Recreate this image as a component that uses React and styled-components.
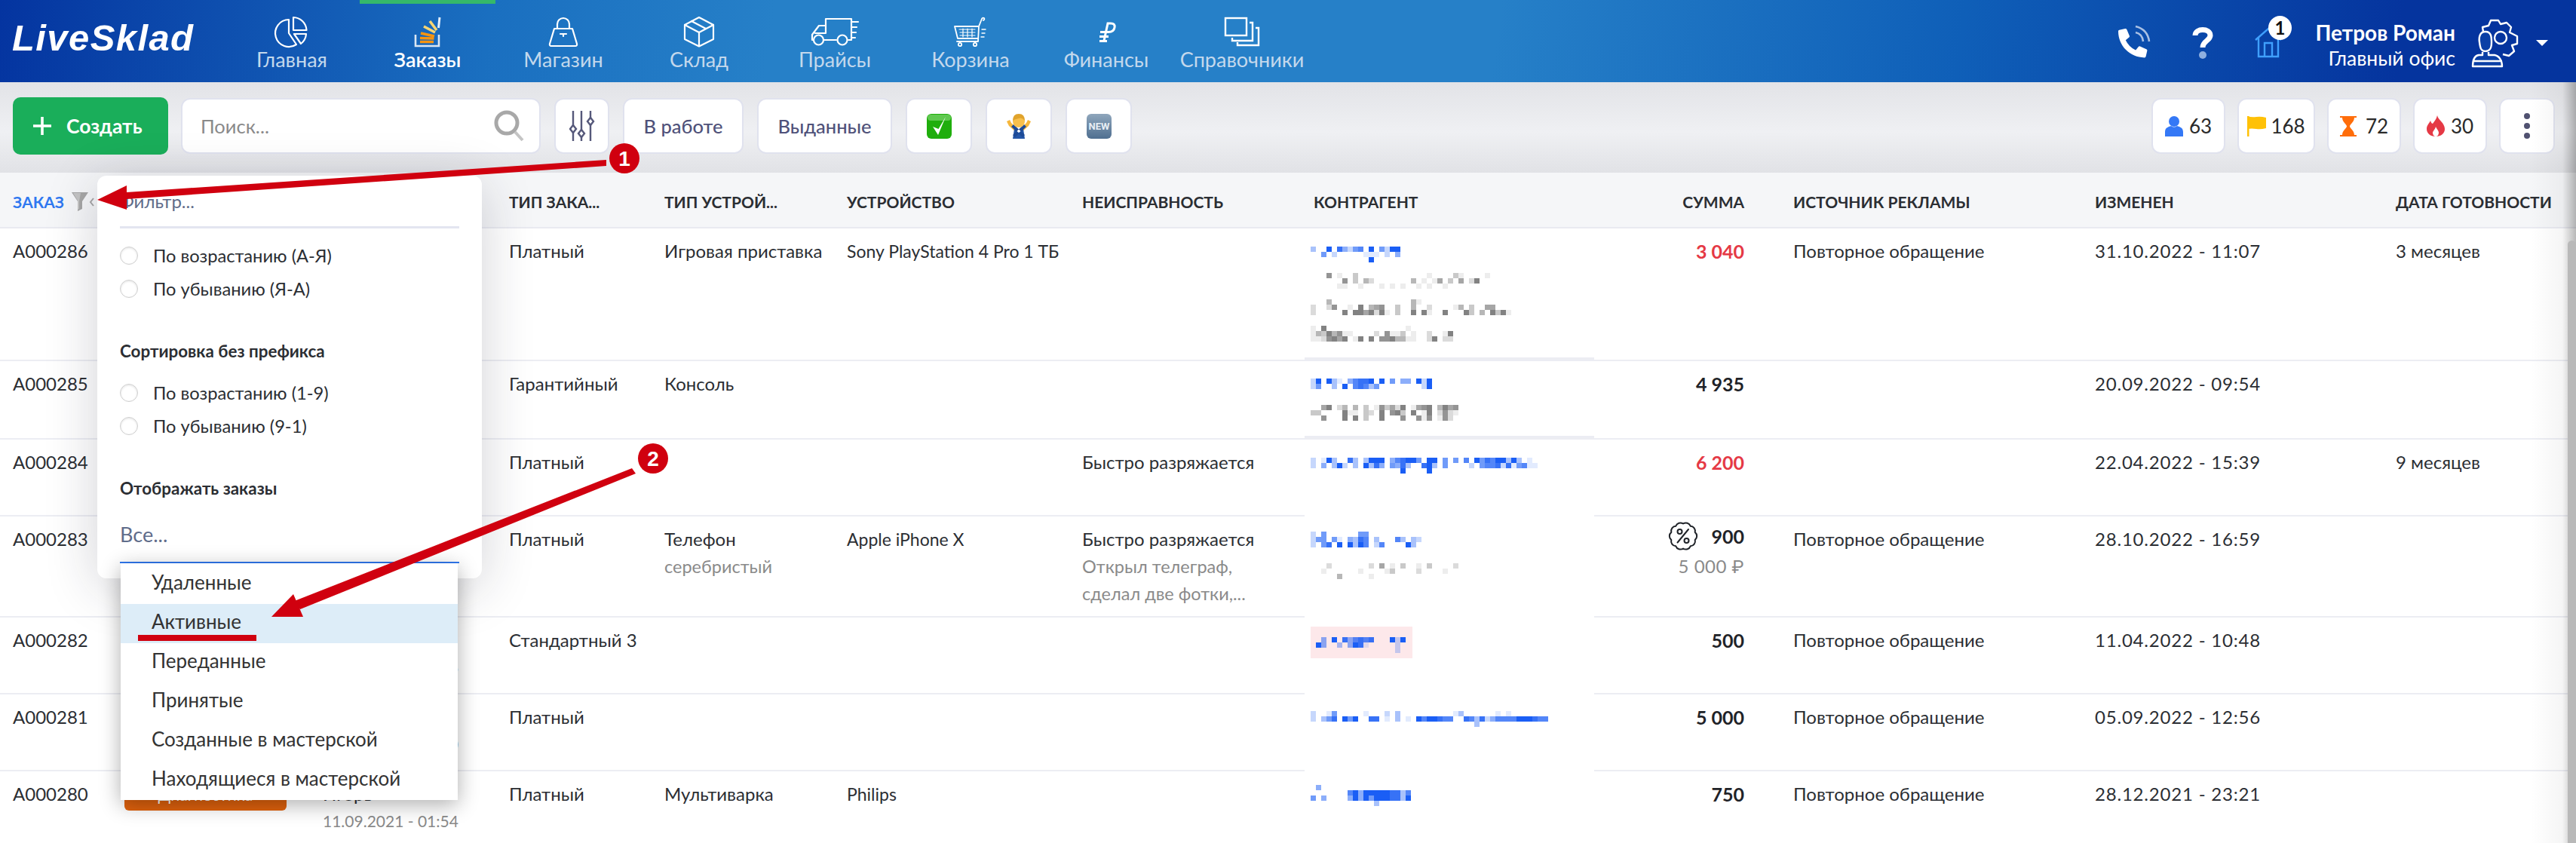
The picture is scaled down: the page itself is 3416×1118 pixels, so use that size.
import React from 'react'
import styled, { createGlobalStyle } from 'styled-components'

const FONT = `Lato, Roboto, "Noto Sans", "DejaVu Sans", sans-serif`

const GlobalStyle = createGlobalStyle`
    html, body { margin: 0; padding: 0; background: #fff; }
    body { font-family: ${FONT}; color: #2b2e33; }
    * { box-sizing: border-box; }
`

const Page = styled.div`
    position: relative;
    width: 3416px;
    height: 1118px;
    overflow: hidden;
    background: #fff;
`

/* ---------- top bar ---------- */

const Header = styled.header`
    display: flex;
    height: 109px;
    background: linear-gradient(97deg, #0434a0 0%, #1a6fc0 19%, #2680c8 30%, #2680c8 58%, #0f5fb8 76%, #05349e 93%);
`

const Logo = styled.div`
    width: 297px;
    padding: 20px 0 0 16px;
    font-family: "Liberation Sans", sans-serif;
    font-size: 49px;
    line-height: 60px;
    font-weight: 700;
    font-style: italic;
    color: #fff;
    letter-spacing: 1.4px;
`

const Tab = styled.div`
    width: 180px;
    display: flex;
    flex-direction: column;
    align-items: center;
    border-top: 5px solid ${props => props.$active ? '#35b86a' : 'transparent'};
    padding-top: 17px;
`

const TabIcon = styled.div`
    height: 40px;
    display: flex;
    align-items: center;
    justify-content: center;
    svg { overflow: visible; }
`

const TabLabel = styled.div`
    margin-top: 3px;
    font-size: 27px;
    line-height: 28px;
    font-weight: ${props => props.$active ? 600 : 400};
    color: ${props => props.$active ? '#fff' : '#c3d8ec'};
`

const HeaderRight = styled.div`
    margin-left: auto;
    display: flex;
    align-items: center;
    padding: 5px 37px 0 0;
`

const HeaderSlot = styled.div`
    position: relative;
    display: flex;
    margin-left: ${props => props.$ml}px;
    svg { overflow: visible; }
`

const HouseBadge = styled.span`
    position: absolute;
    top: -16px;
    left: 18px;
    width: 31px;
    height: 32px;
    border-radius: 50%;
    background: #fff;
    color: #111;
    font-size: 24px;
    font-weight: 700;
    line-height: 32px;
    text-align: center;
`

const UserBlock = styled.div`
    margin-left: 14px;
    width: 216px;
    text-align: right;
    color: #fff;
    margin-top: 6px;
`

const UserName = styled.div`
    font-size: 28px;
    line-height: 34px;
    font-weight: 700;
    white-space: nowrap;
`

const UserOffice = styled.div`
    font-size: 26.5px;
    line-height: 34px;
    white-space: nowrap;
`

/* ---------- toolbar ---------- */

const Toolbar = styled.div`
    display: flex;
    align-items: center;
    gap: 18px;
    height: 120px;
    padding: 0 28px 4px 17px;
    background: linear-gradient(180deg, #e2e3e7 0%, #eff0f3 55%, #e1e2e6 100%);
`

const CreateButton = styled.button`
    all: unset;
    box-sizing: border-box;
    width: 206px;
    height: 76px;
    margin-right: -1px;
    display: flex;
    align-items: center;
    padding-left: 27px;
    gap: 20px;
    border-radius: 10px;
    background: #1aae5a;
    color: #fff;
    font-size: 26.5px;
    font-weight: 700;
`

const ToolButton = styled.button`
    all: unset;
    box-sizing: border-box;
    height: 74px;
    width: ${props => props.$w}px;
    display: flex;
    align-items: center;
    justify-content: center;
    gap: ${props => props.$gap || 0}px;
    background: #fff;
    border: 2px solid #e0e2ee;
    border-radius: 12px;
    color: #50527a;
    font-size: 25.5px;
    font-weight: 500;
`

const CountButton = styled(ToolButton)`
    color: #2a2a2a;
    font-size: 26px;
    font-weight: 400;
`

const SearchBox = styled.div`
    width: 477px;
    height: 74px;
    display: flex;
    align-items: center;
    justify-content: space-between;
    padding: 0 20px 0 24px;
    background: #fff;
    border: 2px solid #e0e2ee;
    border-radius: 12px;
    color: #8a8a8a;
    font-size: 25.5px;
`

const CountGroup = styled.div`
    margin-left: auto;
    display: flex;
    gap: 16px;
`

/* ---------- table ---------- */

const COLUMNS = '148px 263px 247px 206px 242px 312px 303px 376px 264px 400px 399px 228px'

const HeadRow = styled.div`
    display: grid;
    grid-template-columns: ${COLUMNS};
    align-items: center;
    height: 74px;
    padding: 4px 0 0 17px;
    background: #f5f6f8;
    border-bottom: 2px solid #e9eaf1;
`

const HeadCell = styled.div`
    display: flex;
    align-items: center;
    gap: 10px;
    font-size: 21px;
    font-weight: 700;
    padding-left: ${props => props.$inset || 0}px;
    color: ${props => props.$active ? '#2f78f0' : '#2b2e33'};
    ${props => props.$right && 'justify-content: flex-end; padding-right: 65px;'}
`

const Row = styled.div`
    display: grid;
    grid-template-columns: ${COLUMNS};
    height: ${props => props.$h}px;
    padding-left: 17px;
    border-bottom: 2px solid #ecedf3;
    font-size: 24px;
    line-height: 36px;
`

const Cell = styled.div`
    padding-top: 12px;
    white-space: nowrap;
`

const DeviceCell = styled(Cell)`
    font-size: 23px;
`

const TimeCell = styled(Cell)`
    letter-spacing: .8px;
`

const Muted = styled.div`
    color: #8a8a8a;
    font-size: 23.5px;
`

const StatusCell = styled.div`
    position: relative;
`

const StatusBadge = styled.div`
    width: 215px;
    margin-top: 12px;
    height: 40px;
    border-radius: 6px;
    background: #e0620d;
    color: #fff;
    font-size: 21px;
    line-height: 38px;
    text-align: center;
`

const DateCell = styled(Cell)`
    width: 179px;
    text-align: ${props => props.$right ? 'right' : 'left'};
`

const DateSub = styled.div`
    color: #8a8a8a;
    font-size: 21px;
    text-align: right;
`

const PartnerCell = styled.div`
    margin: 0 0 ${props => props.$thick ? -4 : -2}px -8px;
    padding-left: 8px;
    background: #fff;
    ${props => props.$thick && 'border-bottom: 7px solid #ecedf3;'}
    svg { display: block; }
`

const SumCell = styled(Cell)`
    padding-right: 65px;
    text-align: right;
    font-weight: 700;
    font-size: 25px;
    color: ${props => props.$red ? '#e53945' : '#1f2328'};
`

const SumLine = styled.div`
    display: flex;
    justify-content: flex-end;
    align-items: center;
    gap: 17px;
    margin-top: -8px;
    height: 44px;
`

const OldSum = styled.div`
    font-weight: 400;
    font-size: 24px;
    color: #8a8a8a;
    letter-spacing: .5px;
`

/* ---------- filter popup ---------- */

const Popup = styled.div`
    position: absolute;
    left: 129px;
    top: 233px;
    width: 510px;
    height: 534px;
    padding: 0 30px;
    background: #fff;
    border-radius: 12px;
    box-shadow: 0 12px 70px rgba(30, 30, 50, .2);
`

const PopupInput = styled.div`
    display: flex;
    align-items: center;
    height: 70px;
    border-bottom: 3px solid #e3e5f0;
    margin-bottom: 14px;
    color: #5f6c8a;
    font-size: 24px;
`

const RadioRow = styled.label`
    display: flex;
    align-items: center;
    gap: 20px;
    height: 44px;
    font-size: 23.7px;
`

const RadioMark = styled.span`
    width: 24px;
    height: 24px;
    border-radius: 50%;
    background: #fff;
    border: 1.5px solid #cfcfcf;
    box-shadow: inset 0 1px 3px rgba(0, 0, 0, .12);
`

const PopupTitle = styled.div`
    margin-top: ${props => props.$top}px;
    margin-bottom: ${props => props.$bottom}px;
    height: 44px;
    line-height: 44px;
    font-size: 22.4px;
    font-weight: 700;
`

const SelectValue = styled.div`
    display: flex;
    align-items: center;
    height: 77px;
    padding-top: 2px;
    border-bottom: 2px solid #2f78f0;
    color: #5f6c8a;
    font-size: 27px;
`

const Dropdown = styled.ul`
    position: absolute;
    left: 31px;
    top: 514px;
    width: 447px;
    margin: 0;
    padding: 2px 0 0;
    list-style: none;
    background: #fff;
    box-shadow: 0 6px 26px rgba(0, 0, 0, .32);
`

const DropdownItem = styled.li`
    height: 52px;
    padding-left: 41px;
    font-size: 26px;
    line-height: 47px;
    color: #333;
    background: ${props => props.$hover ? '#ddedf8' : 'transparent'};
`

/* ---------- things lying over the page ---------- */

const EdgeShade = styled.div`
    position: absolute;
    top: 109px;
    right: 0;
    bottom: 0;
    width: 60px;
    background: linear-gradient(90deg, rgba(0,0,0,0) 0%, rgba(0,0,0,.04) 70%, rgba(0,0,0,.28) 100%);
    pointer-events: none;
`

const ScrollThumb = styled.div`
    position: absolute;
    top: 319px;
    right: 0;
    bottom: 0;
    width: 11px;
    border-radius: 6px 6px 0 0;
    background: #b9b9b9;
`

const Annotations = styled.svg`
    position: absolute;
    left: 0;
    top: 0;
    pointer-events: none;
    font-family: "Liberation Sans", sans-serif;
`

/* ---------- icons ---------- */

const line = { fill: 'none', stroke: '#fff', strokeWidth: 2.2, strokeLinejoin: 'round', strokeLinecap: 'round' }

const PieIcon = () => (
    <svg width="40" height="40" viewBox="0 0 40 40" {...line}>
        <path d="M16 4A18 18 0 1 0 26 37L16 22Z" />
        <path d="M22 1A18 18 0 0 1 39.5 18H22Z" />
        <path d="M23 23H39A18 18 0 0 1 32 36Z" />
    </svg>
)

const OrdersIcon = () => (
    <svg width="35" height="40" viewBox="0 0 35 40" fill="none">
        <path d="M1 24V39H32V24" stroke="#dbe7f3" strokeWidth="2.6" />
        <path d="M7 33.5H25M7 28.5L25.5 29M8 22L26 26" stroke="#f7940f" strokeWidth="3.6" />
        <path d="M12 13L27 21M20 6L29 18" stroke="#f8d673" strokeWidth="3.6" />
        <path d="M33 1L31.5 15" stroke="#e3eefa" strokeWidth="3" />
    </svg>
)

const BagIcon = () => (
    <svg width="40" height="40" viewBox="0 0 40 40" {...line}>
        <path d="M12 16V10A8 8 0 0 1 28 10V16" />
        <path d="M8 16H32L38 36Q38.5 39 36 39H4Q1.5 39 2 36Z" />
        <path d="M16 23H24M20 23V26" />
    </svg>
)

const BoxIcon = () => (
    <svg width="40" height="40" viewBox="0 0 40 40" {...line}>
        <path d="M20 1L39 11V30L20 39.5L1 30V11Z" />
        <path d="M1 11L20 21L39 11M20 21V39M10 6L29 16" />
    </svg>
)

const TruckIcon = () => (
    <svg width="62" height="36" viewBox="0 0 62 36" {...line}>
        <path d="M19 12V1H53V29H49M33 29H17M3 29H1V22L10 10H19V20H5" />
        <circle cx="9.5" cy="29" r="6.5" />
        <circle cx="41" cy="29" r="6.5" />
        <path d="M53 5H62M53 12H60M53 19H59M53 26H58" />
    </svg>
)

const CartIcon = () => (
    <svg width="44" height="38" viewBox="0 0 44 38" {...line} strokeWidth="1.8">
        <path d="M1 12H33L37 2Q38 0 40 1Q41 3 39 4M1 12L5 28H31M4 32H32L33 12" />
        <path d="M7 16H28M8 20H28M8 24H28M12 15V26M18 15V26M24 15V26" strokeWidth="1.2" />
        <circle cx="8" cy="36" r="2.2" />
        <circle cx="28" cy="36" r="2.2" />
        <path d="M37 16H42M37 21H41M36 26H40" strokeWidth="1.4" />
    </svg>
)

const RubleIcon = () => (
    <svg width="24" height="27" viewBox="0 0 24 27" fill="none" stroke="#fff" strokeWidth="3">
        <path d="M9 25L14 2H18Q24 2 23 7.5Q22 13.5 15 13.5H4M3 19.5H15M3 25.5H13" />
    </svg>
)

const PagesIcon = () => (
    <svg width="46" height="38" viewBox="0 0 46 38" fill="none" stroke="#fff" strokeWidth="2.4">
        <rect x="1" y="1" width="28" height="23" />
        <path d="M33 7H37V31H10V27M41 14H45V37H17V33" />
    </svg>
)

const PhoneIcon = () => (
    <svg width="42" height="42" viewBox="0 0 42 42">
        <path transform="translate(0 2) scale(.075)" fill="#fff" d="M497.39 361.8l-112-48a24 24 0 0 0-28 6.9l-49.6 60.6A370.66 370.66 0 0 1 130.6 204.11l60.6-49.6a23.94 23.94 0 0 0 6.9-28l-48-112A24.16 24.16 0 0 0 122.6.61l-104 24A24 24 0 0 0 0 48c0 256.5 207.9 464 464 464a24 24 0 0 0 23.4-18.6l24-104a24.29 24.29 0 0 0-14.01-27.6z" />
        <path d="M23 7Q32 9 33 19M23 -1Q39 3 41 19" fill="none" stroke="#a9c0e4" strokeWidth="2.6" />
    </svg>
)

const QuestionIcon = () => (
    <svg width="28" height="42" viewBox="0 0 28 42">
        <path d="M4 11C4 1 24 1 24 11C24 18 14 18 14 27" fill="none" stroke="#fff" strokeWidth="7" />
        <ellipse cx="14" cy="37" rx="5" ry="5" fill="#8fb0e0" />
    </svg>
)

const HouseIcon = () => (
    <svg width="36" height="40" viewBox="0 0 36 40" fill="none" stroke="#3fa0ff" strokeWidth="2.4">
        <path d="M1 16L18 1L35 16M5 13V38H31V13M13 38V20H23V38" />
    </svg>
)

const GearUserIcon = () => (
    <svg width="62" height="62" viewBox="0 0 62 62" fill="none" stroke="#fff" strokeWidth="2.4" strokeLinejoin="round">
        <path d="M16 22L14 10L22 8L25 1H35L38 6L46 4L52 10L50 17L60 22V32L53 34L56 42L49 48L41 46" />
        <circle cx="38" cy="24" r="8" />
        <path d="M18 16C10 16 9 24 10 30C11 38 12 42 18 42C24 42 26 38 26 30C26 24 26 16 18 16Z" fill="#0a3fa6" />
        <path d="M14 43V47H9C3 48 1 54 1 62H40C40 54 36 48 30 47H22V43M1 55H40" fill="#0a3fa6" />
    </svg>
)

const CaretIcon = () => (
    <svg width="16" height="8" viewBox="0 0 16 8">
        <path d="M0 0H16L8 8Z" fill="#fff" />
    </svg>
)

const PlusIcon = () => (
    <svg width="24" height="24" viewBox="0 0 24 24" stroke="#fff" strokeWidth="3.6">
        <path d="M12 0V24M0 12H24" />
    </svg>
)

const SearchIcon = () => (
    <svg width="40" height="42" viewBox="0 0 40 42" fill="none" stroke="#a8a8a8">
        <circle cx="17" cy="17" r="14" strokeWidth="5" />
        <path d="M28 29L38 40" strokeWidth="4" stroke="#c4c4c4" />
    </svg>
)

const SlidersIcon = () => (
    <svg width="34" height="42" viewBox="0 0 34 42" fill="none" stroke="#55587a" strokeWidth="2.4">
        <path d="M5 1V21M5 29V41M16 1V27M16 35V41M28 1V11M28 19V41" />
        <path d="M5 20L9 25L5 30L1 25ZM16 26L20 31L16 36L12 31ZM28 10L32 15L28 20L24 15Z" />
    </svg>
)

const CheckEmoji = () => (
    <svg width="33" height="33" viewBox="0 0 33 33">
        <rect width="33" height="33" rx="6" fill="#1fae0c" />
        <rect x="1" y="1" width="31" height="8" rx="4" fill="#5fc94f" />
        <path d="M8 17L15 28L25 4L15.5 20Z" fill="#fff" />
    </svg>
)

const PersonEmoji = () => (
    <svg width="32" height="34" viewBox="0 0 32 34">
        <path d="M0 11L4 9L6 13L15 22L12 25L3 17Z M32 11L28 9L26 13L17 22L20 25L29 17Z" fill="#f6b73c" />
        <path d="M8 34L10 21L16 26L22 21L24 34Z" fill="#2457a8" />
        <path d="M6 18L9 15L24 29L21 32Z M26 18L23 15L8 29L11 32Z" fill="#1d4a96" />
        <circle cx="16" cy="11" r="8" fill="#f8c04c" />
        <path d="M8 10Q8 1 16 1Q24 1 24 10Q20 5 16 7Q11 8 8 10Z" fill="#e0a32c" />
    </svg>
)

const NewEmoji = () => (
    <svg width="33" height="33" viewBox="0 0 33 33">
        <defs>
            <linearGradient id="newBg" x1="0" y1="0" x2="0" y2="1">
                <stop offset="0" stopColor="#8fa6bc" />
                <stop offset="1" stopColor="#4f6f90" />
            </linearGradient>
        </defs>
        <rect width="33" height="33" rx="6" fill="url(#newBg)" />
        <text x="16.5" y="21" textAnchor="middle" fontSize="13" fontWeight="700" fill="#e8eef4" fontFamily="Roboto, sans-serif">NEW</text>
    </svg>
)

const PersonCount = () => (
    <svg width="24" height="27" viewBox="0 0 24 27" fill="#3478f6">
        <circle cx="12" cy="7" r="7" />
        <path d="M0 27V21C0 15 5 14 8 13Q12 16 16 13C19 14 24 15 24 21V27Z" />
    </svg>
)

const FlagCount = () => (
    <svg width="25" height="27" viewBox="0 0 25 27" fill="#ffc107">
        <path d="M0 0H2.5V27H0Z" />
        <path d="M0 0Q6 2 12 1T25 2V16Q18 18 12 17T0 17Z" />
    </svg>
)

const GlassCount = () => (
    <svg width="22" height="27" viewBox="0 0 22 27" fill="#ff6d0a">
        <path d="M0 0H22V2H19C19 8 13 11 13 13.5C13 16 19 19 19 25H22V27H0V25H3C3 19 9 16 9 13.5C9 11 3 8 3 2H0Z" />
    </svg>
)

const FlameCount = () => (
    <svg width="24" height="28" viewBox="0 0 24 28" fill="#e53945">
        <path d="M14 0C15 6 24 10 24 18C24 24 19 28 12 28C5 28 0 24 0 18C0 13 3 11 5 7C6 10 7 11 8 11C10 8 13 5 14 0Z" />
        <path d="M12 15C13 18 16 20 16 23C16 26 14 28 12 28C10 28 8 26 8 23C8 21 11 19 12 15Z" fill="#fff" />
    </svg>
)

const DotsIcon = () => (
    <svg width="8" height="34" viewBox="0 0 8 34" fill="#505170">
        <circle cx="4" cy="4" r="4" />
        <circle cx="4" cy="17" r="4" />
        <circle cx="4" cy="30" r="4" />
    </svg>
)

const FunnelIcon = () => (
    <svg width="30" height="25" viewBox="0 0 30 25">
        <path d="M0 0H22L14 12V22L8 25V12Z" fill="#a6a6a6" />
        <path d="M2 1H12L10 12V22L8 23V11Z" fill="#c4c4c4" />
        <path d="M29 8L25 13L29 18" fill="none" stroke="#a6a6a6" strokeWidth="2" />
    </svg>
)

// wavy discount seal: ten bumps round a circle
const sealPath = () => {
    let d = ''
    for (let i = 0; i < 10; i++) {
        const a = (i / 10) * 2 * Math.PI - Math.PI / 2
        const x = (20 + 16.5 * Math.cos(a)).toFixed(1)
        const y = (20 + 16.5 * Math.sin(a)).toFixed(1)
        d += i === 0 ? `M${x} ${y}` : `A6.5 6.5 0 0 1 ${x} ${y}`
    }
    const x0 = 20
    const y0 = 3.5
    return `${d}A6.5 6.5 0 0 1 ${x0} ${y0}Z`
}

const SealIcon = () => (
    <svg width="40" height="40" viewBox="0 0 40 40" fill="none" stroke="#1f2328" strokeWidth="2">
        <path d={sealPath()} strokeLinejoin="round" />
        <circle cx="15.5" cy="14" r="3" />
        <circle cx="24.5" cy="26" r="3" />
        <path d="M27 11L12.5 28.500" strokeLinecap="round" />
    </svg>
)

/* ---------- the blurred-out customer cells ---------- */

const CELL = 7
const BLUE = '#1a5ef5'
const GREY = '#707070'

function Mosaic({ blocks, height, pink }) {
    return (
        <svg width="376" height={height} shapeRendering="crispEdges">
            {pink && <rect x="0" y="12" width="135" height="42" fill="#fde8ea" />}
            {blocks.map(([top, color, rows], b) => rows.map((text, r) => text.split('').map((ch, i) => (
                ch === '.' ? null :
                    <rect key={`${b}-${r}-${i}`} x={i * CELL} y={top + r * CELL} width={CELL} height={CELL} fill={color} opacity={Number(ch) / 8} />
            ))))}
        </svg>
    )
}

const PARTNERS = [
    [
        [24, BLUE, ['30080742560805288', '00502000001110204', '...........8']],
        [59, GREY, ['...6.1..3.............1....31....1', '......6.3.42.......4.1.15.3.5.27', '.....11..1...1.1.1..1.1..1']],
        [94, GREY, ['...4...............41', '2..26..1.7.456..3..4..2....14.3..55', '2.....7.7757271.3..7.71..7...73.4.7371']],
        [129, GREY, ['1.7...............1', '14374611....2.6113.1..2..17', '1126757.17.7.6674411..27.22']],
    ],
    [
        [23, BLUE, ['28.831.46778.8.5.44.828', '25..3.8.67635........28']],
        [58, GREY, ['..57.24.4.3.163527.1567.4756', '33....711.32.7.673.7.17.2621', '..6...7.7.3..7...6..616.162']],
    ],
    [
        [24, BLUE, ['2.183..73.3888.467885.88.5.5.6.857688383.1', '2.4.382.3.8374.5473..783.5....2.56672715611', '.................8....8']],
    ],
    [
        [20, BLUE, ['2.5......55', '255.51.4376.3...63.32', '2.57.8.8386.26....83']],
        [62, GREY, ['...2.......2.5.1.3..1.3....2', '..1......1....13....2....1', '.....4.....1']],
    ],
    [
        [26, BLUE, ['..4.8.746767...828', '.84..3.4871.....2', '................2']],
    ],
    [
        [22, BLUE, ['2..15.....1...2.3..........13......1.1', '2.357.858..77.1.3.1.8688766..7637246666888766', '...............................3']],
    ],
    [
        [18, BLUE, ['.4', '.......684888887736', '5.4....484858887738', '............3']],
    ],
]

/* ---------- data ---------- */

const NAV = [
    ['Главная', <PieIcon />],
    ['Заказы', <OrdersIcon />, true],
    ['Магазин', <BagIcon />],
    ['Склад', <BoxIcon />],
    ['Прайсы', <TruckIcon />],
    ['Корзина', <CartIcon />],
    ['Финансы', <RubleIcon />],
    ['Справочники', <PagesIcon />],
]

const HEADS = ['ТИП ЗАКА...', 'ТИП УСТРОЙ...', 'УСТРОЙСТВО', 'НЕИСПРАВНОСТЬ']

const AD = 'Повторное обращение'

const ROWS = [
    { h: 176, id: 'A000286', type: 'Платный', kind: 'Игровая приставка', device: 'Sony PlayStation 4 Pro 1 ТБ', sum: '3 040', red: true, ad: AD, changed: '31.10.2022 - 11:07', ready: '3 месяцев' },
    { h: 104, id: 'A000285', type: 'Гарантийный', kind: 'Консоль', sum: '4 935', changed: '20.09.2022 - 09:54' },
    { h: 102, id: 'A000284', type: 'Платный', issue: 'Быстро разряжается', sum: '6 200', red: true, changed: '22.04.2022 - 15:39', ready: '9 месяцев' },
    { h: 134, id: 'A000283', type: 'Платный', kind: 'Телефон', kindSub: 'серебристый', device: 'Apple iPhone X', issue: 'Быстро разряжается', issueSub: ['Открыл телеграф,', 'сделал две фотки,...'], sum: '900', oldSum: '5 000 ₽', ad: AD, changed: '28.10.2022 - 16:59' },
    { h: 102, id: 'A000282', type: 'Стандартный 3', sum: '500', ad: AD, changed: '11.04.2022 - 10:48', dateSub: '11.04.2022 - 10:46', pink: true },
    { h: 102, id: 'A000281', type: 'Платный', sum: '5 000', ad: AD, changed: '05.09.2022 - 12:56', dateSub: '05.09.2022 - 12:50' },
    { h: 110, id: 'A000280', type: 'Платный', kind: 'Мультиварка', device: 'Philips', sum: '750', ad: AD, changed: '28.12.2021 - 23:21', dateTop: 'Игорь', dateSub: '11.09.2021 - 01:54', status: 'Диагностика' },
]

const OPTIONS = ['Удаленные', 'Активные', 'Переданные', 'Принятые', 'Созданные в мастерской', 'Находящиеся в мастерской']

function App() {
    return (
        <Page>
            <GlobalStyle />
            <Header>
                <Logo>LiveSklad</Logo>
                {NAV.map(([label, icon, active]) => (
                    <Tab key={label} $active={active}>
                        <TabIcon>{icon}</TabIcon>
                        <TabLabel $active={active}>{label}</TabLabel>
                    </Tab>
                ))}
                <HeaderRight>
                    <HeaderSlot $ml={0}><PhoneIcon /></HeaderSlot>
                    <HeaderSlot $ml={56}><QuestionIcon /></HeaderSlot>
                    <HeaderSlot $ml={55}><HouseIcon /><HouseBadge>1</HouseBadge></HeaderSlot>
                    <UserBlock>
                        <UserName>Петров Роман</UserName>
                        <UserOffice>Главный офис</UserOffice>
                    </UserBlock>
                    <HeaderSlot $ml={22}><GearUserIcon /></HeaderSlot>
                    <HeaderSlot $ml={23}><CaretIcon /></HeaderSlot>
                </HeaderRight>
            </Header>

            <Toolbar>
                <CreateButton><PlusIcon />Создать</CreateButton>
                <SearchBox>Поиск...<SearchIcon /></SearchBox>
                <ToolButton $w={73}><SlidersIcon /></ToolButton>
                <ToolButton $w={160}>В работе</ToolButton>
                <ToolButton $w={179}>Выданные</ToolButton>
                <ToolButton $w={88}><CheckEmoji /></ToolButton>
                <ToolButton $w={88}><PersonEmoji /></ToolButton>
                <ToolButton $w={88}><NewEmoji /></ToolButton>
                <CountGroup>
                    <CountButton $w={98} $gap={8}><PersonCount />63</CountButton>
                    <CountButton $w={103} $gap={6}><FlagCount />168</CountButton>
                    <CountButton $w={98} $gap={12}><GlassCount />72</CountButton>
                    <CountButton $w={98} $gap={8}><FlameCount />30</CountButton>
                    <CountButton $w={74}><DotsIcon /></CountButton>
                </CountGroup>
            </Toolbar>

            <HeadRow>
                <HeadCell $active>ЗАКАЗ <FunnelIcon /></HeadCell>
                <HeadCell />
                <HeadCell />
                {HEADS.map(h => <HeadCell key={h}>{h}</HeadCell>)}
                <HeadCell $inset={4}>КОНТРАГЕНТ</HeadCell>
                <HeadCell $right>СУММА</HeadCell>
                <HeadCell>ИСТОЧНИК РЕКЛАМЫ</HeadCell>
                <HeadCell>ИЗМЕНЕН</HeadCell>
                <HeadCell>ДАТА ГОТОВНОСТИ</HeadCell>
            </HeadRow>

            {ROWS.map((row, i) => (
                <Row key={row.id} $h={row.h}>
                    <Cell>{row.id}</Cell>
                    <StatusCell>{row.status && <StatusBadge>{row.status}</StatusBadge>}</StatusCell>
                    <DateCell $right={!row.dateTop}>
                        {row.dateTop ? row.dateTop : <>&nbsp;</>}
                        {row.dateSub && <DateSub>{row.dateSub}</DateSub>}
                    </DateCell>
                    <Cell>{row.type}</Cell>
                    <Cell>{row.kind}{row.kindSub && <Muted>{row.kindSub}</Muted>}</Cell>
                    <DeviceCell>{row.device}</DeviceCell>
                    <Cell>
                        {row.issue}
                        {row.issueSub && row.issueSub.map(t => <Muted key={t}>{t}</Muted>)}
                    </Cell>
                    <PartnerCell $thick={i < 2}>
                        <Mosaic blocks={PARTNERS[i]} height={row.h - 20} pink={row.pink} />
                    </PartnerCell>
                    <SumCell $red={row.red}>
                        {row.oldSum ? (
                            <>
                                <SumLine><SealIcon />{row.sum}</SumLine>
                                <OldSum>{row.oldSum}</OldSum>
                            </>
                        ) : row.sum}
                    </SumCell>
                    <Cell>{row.ad}</Cell>
                    <TimeCell>{row.changed}</TimeCell>
                    <Cell>{row.ready}</Cell>
                </Row>
            ))}

            <Popup>
                <PopupInput>Фильтр...</PopupInput>
                <RadioRow><RadioMark />По возрастанию (А-Я)</RadioRow>
                <RadioRow><RadioMark />По убыванию (Я-А)</RadioRow>
                <PopupTitle $top={39} $bottom={11}>Сортировка без префикса</PopupTitle>
                <RadioRow><RadioMark />По возрастанию (1-9)</RadioRow>
                <RadioRow><RadioMark />По убыванию (9-1)</RadioRow>
                <PopupTitle $top={39} $bottom={0}>Отображать заказы</PopupTitle>
                <SelectValue>Все...</SelectValue>
                <Dropdown>
                    {OPTIONS.map((o, i) => <DropdownItem key={o} $hover={i === 1}>{o}</DropdownItem>)}
                </Dropdown>
            </Popup>

            <EdgeShade />
            <ScrollThumb />

            <Annotations width="3416" height="1118" viewBox="0 0 3416 1118">
                <g fill="#d0000f">
                    <polygon points="804,212 804,220 168,264 168,255" />
                    <polygon points="129,265 168,246 168,278" />
                    <ellipse cx="828" cy="210" rx="20" ry="20" />
                    <polygon points="838,621 843,628 398,808 388,798" />
                    <polygon points="360,818 389,788 402,818" />
                    <ellipse cx="866" cy="608" rx="20" ry="20" />
                    <rect x="183" y="842" width="157" height="8" />
                </g>
                <g fill="#fff" fontSize="28" fontWeight="700" textAnchor="middle">
                    <text x="828" y="220">1</text>
                    <text x="866" y="618">2</text>
                </g>
            </Annotations>
        </Page>
    )
}

export default App
